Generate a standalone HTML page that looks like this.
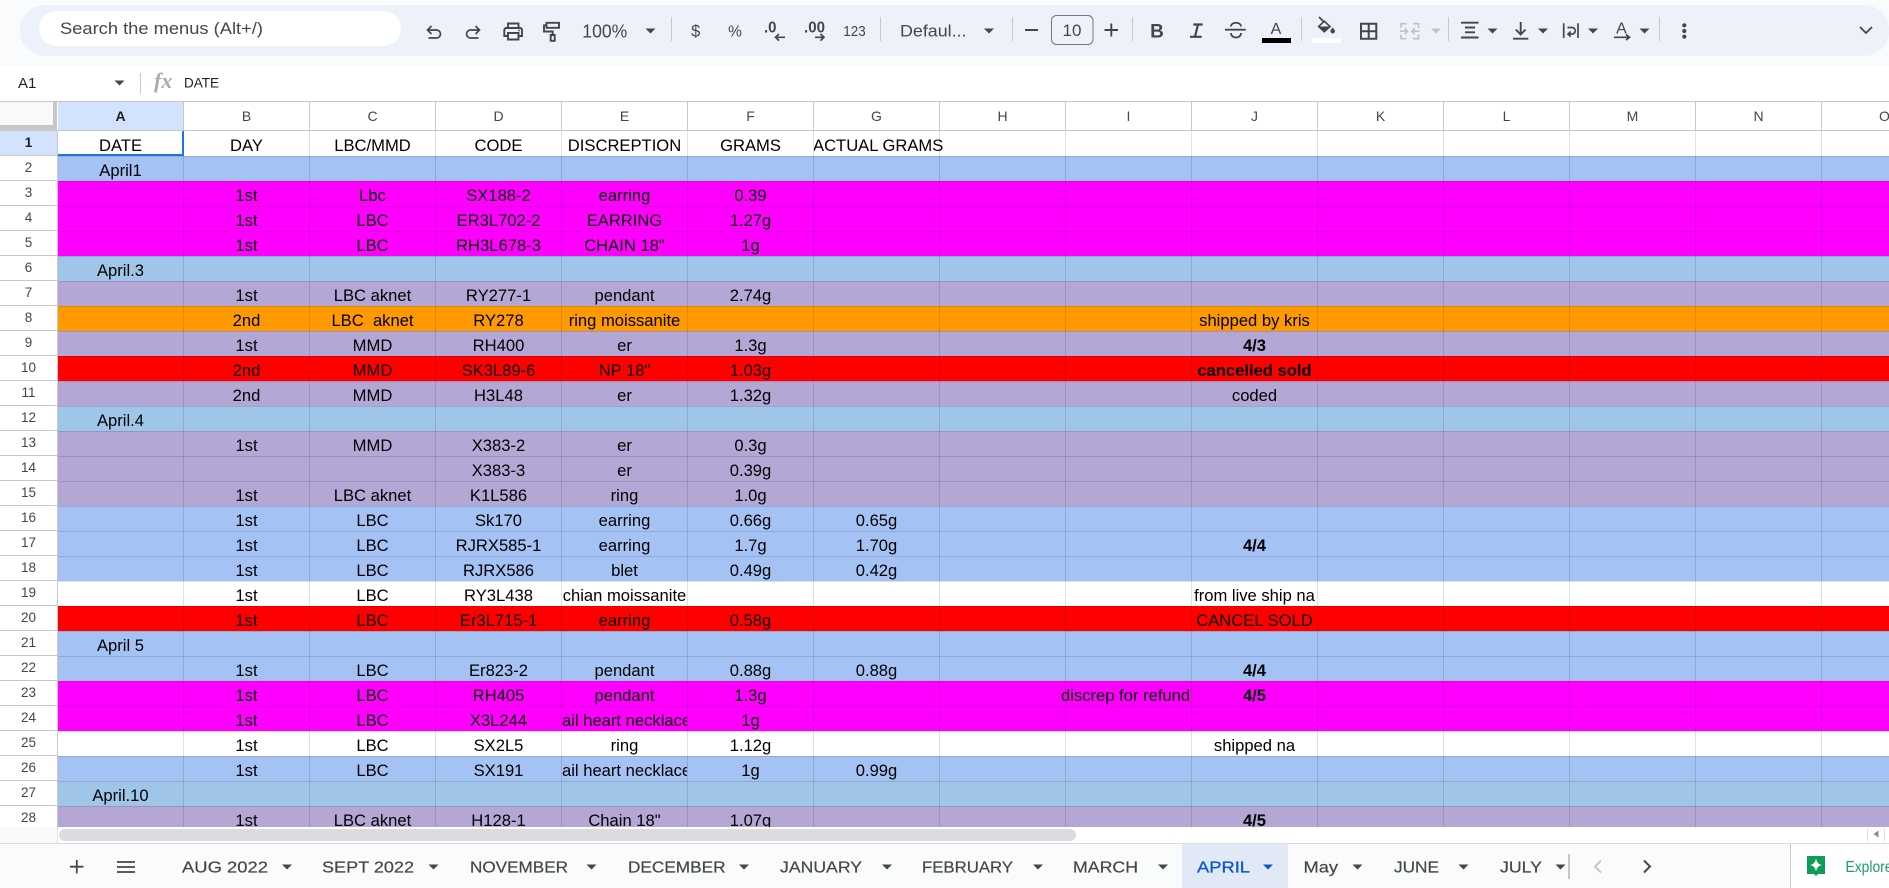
<!DOCTYPE html>
<html><head><meta charset="utf-8"><title>April</title>
<style>
html,body{margin:0;padding:0;width:1889px;height:888px;overflow:hidden;background:#fff}
body{position:relative;font-family:"Liberation Sans",Arial,sans-serif}
#g{position:absolute;left:58px;top:131px;width:1831px;height:696px;overflow:hidden}
.r{position:absolute;left:0;width:1831px;height:25px;box-sizing:border-box;border-top:1px solid rgba(0,0,0,.12);
background-image:repeating-linear-gradient(90deg,transparent 0,transparent 125px,rgba(0,0,0,.12) 125px,rgba(0,0,0,.12) 126px)}
.r i{position:absolute;top:4px;width:125px;height:20px;line-height:20px;font-style:normal;font-size:16.6px;color:#000;text-align:center;white-space:nowrap;overflow:hidden}
.a{left:0}.b{left:126px}.c{left:252px}.d{left:378px}.e{left:504px}.f{left:630px}.g{left:756px}.i{left:1003px;width:131px!important;text-align:left!important}.j{left:1134px}
.r i.l{text-align:left}
.r i.w{font-weight:bold}
.m{background-color:#f0f}.p{background-color:#b4a7d6}.u{background-color:#a4c2f4}.s{background-color:#9fc5e8}.o{background-color:#f90}.x{background-color:#f00}.y{background-color:#fff}
.h{position:absolute;top:102px;height:29px;width:125px;line-height:28px;text-align:center;font-size:14px;color:#444746;border-right:1px solid #c7c7c7;background:#fff}
.n{position:absolute;left:0;width:57px;height:24px;line-height:24px;text-align:center;font-size:13.5px;color:#444746;border-right:1px solid #c7c7c7;border-bottom:1px solid #c7c7c7;background:#fff}
svg{position:absolute;left:0;top:0}
</style></head><body>

<div style="position:absolute;left:0;top:0;width:1889px;height:66px;background:#f9fbfd"></div>
<div style="position:absolute;left:20px;top:5px;width:1869px;height:51px;background:#edf2fa;border-radius:25px"></div>
<div style="position:absolute;left:39px;top:11px;width:362px;height:35px;background:#fff;border-radius:18px"></div>

<!-- column headers -->
<div style="position:absolute;left:0;top:101px;width:1889px;height:1px;background:#c7c7c7"></div>
<div style="position:absolute;left:0;top:102px;width:57px;height:29px;background:#fff"></div>
<div style="position:absolute;left:0;top:102px;width:53px;height:23px;background:#f8f9fa"></div>
<div style="position:absolute;left:0;top:125px;width:57px;height:5px;background:#c7c7c7"></div>
<div style="position:absolute;left:53px;top:102px;width:4px;height:28px;background:#c7c7c7"></div>
<div class="h" style="left:58px;background:#d3e3fd;font-weight:bold;color:#1f1f1f">A</div>
<div class="h" style="left:184px">B</div>
<div class="h" style="left:310px">C</div>
<div class="h" style="left:436px">D</div>
<div class="h" style="left:562px">E</div>
<div class="h" style="left:688px">F</div>
<div class="h" style="left:814px">G</div>
<div class="h" style="left:940px">H</div>
<div class="h" style="left:1066px">I</div>
<div class="h" style="left:1192px">J</div>
<div class="h" style="left:1318px">K</div>
<div class="h" style="left:1444px">L</div>
<div class="h" style="left:1570px">M</div>
<div class="h" style="left:1696px">N</div>
<div class="h" style="left:1822px">O</div>
<div style="position:absolute;left:0;top:130px;width:1889px;height:1px;background:#c7c7c7"></div>

<!-- row numbers -->
<div class="n" style="top:131px;background:#d3e3fd;font-weight:bold;color:#1f1f1f">1</div>
<div class="n" style="top:156px">2</div>
<div class="n" style="top:181px">3</div>
<div class="n" style="top:206px">4</div>
<div class="n" style="top:231px">5</div>
<div class="n" style="top:256px">6</div>
<div class="n" style="top:281px">7</div>
<div class="n" style="top:306px">8</div>
<div class="n" style="top:331px">9</div>
<div class="n" style="top:356px">10</div>
<div class="n" style="top:381px">11</div>
<div class="n" style="top:406px">12</div>
<div class="n" style="top:431px">13</div>
<div class="n" style="top:456px">14</div>
<div class="n" style="top:481px">15</div>
<div class="n" style="top:506px">16</div>
<div class="n" style="top:531px">17</div>
<div class="n" style="top:556px">18</div>
<div class="n" style="top:581px">19</div>
<div class="n" style="top:606px">20</div>
<div class="n" style="top:631px">21</div>
<div class="n" style="top:656px">22</div>
<div class="n" style="top:681px">23</div>
<div class="n" style="top:706px">24</div>
<div class="n" style="top:731px">25</div>
<div class="n" style="top:756px">26</div>
<div class="n" style="top:781px">27</div>
<div class="n" style="top:806px">28</div>

<!-- grid -->
<div id="g">
<div class="r y" style="top:0;border-top-color:transparent"><i class="a">DATE</i><i class="b">DAY</i><i class="c">LBC/MMD</i><i class="d">CODE</i><i class="e">DISCREPTION</i><i class="f">GRAMS</i><i class="g l" style="width:200px;text-indent:-1px">ACTUAL GRAMS</i></div>
<div class="r u" style="top:25px"><i class="a">April1</i></div>
<div class="r m" style="top:50px"><i class="b">1st</i><i class="c">Lbc</i><i class="d">SX188-2</i><i class="e">earring</i><i class="f">0.39</i></div>
<div class="r m" style="top:75px"><i class="b">1st</i><i class="c">LBC</i><i class="d">ER3L702-2</i><i class="e">EARRING</i><i class="f">1.27g</i></div>
<div class="r m" style="top:100px"><i class="b">1st</i><i class="c">LBC</i><i class="d">RH3L678-3</i><i class="e">CHAIN 18"</i><i class="f">1g</i></div>
<div class="r s" style="top:125px"><i class="a">April.3</i></div>
<div class="r p" style="top:150px"><i class="b">1st</i><i class="c">LBC aknet</i><i class="d">RY277-1</i><i class="e">pendant</i><i class="f">2.74g</i></div>
<div class="r o" style="top:175px"><i class="b">2nd</i><i class="c">LBC&nbsp; aknet</i><i class="d">RY278</i><i class="e">ring moissanite</i><i class="j">shipped by kris</i></div>
<div class="r p" style="top:200px"><i class="b">1st</i><i class="c">MMD</i><i class="d">RH400</i><i class="e">er</i><i class="f">1.3g</i><i class="j w">4/3</i></div>
<div class="r x" style="top:225px"><i class="b">2nd</i><i class="c">MMD</i><i class="d">SK3L89-6</i><i class="e">NP 18"</i><i class="f">1.03g</i><i class="j w">cancelled sold</i></div>
<div class="r p" style="top:250px"><i class="b">2nd</i><i class="c">MMD</i><i class="d">H3L48</i><i class="e">er</i><i class="f">1.32g</i><i class="j">coded</i></div>
<div class="r s" style="top:275px"><i class="a">April.4</i></div>
<div class="r p" style="top:300px"><i class="b">1st</i><i class="c">MMD</i><i class="d">X383-2</i><i class="e">er</i><i class="f">0.3g</i></div>
<div class="r p" style="top:325px"><i class="d">X383-3</i><i class="e">er</i><i class="f">0.39g</i></div>
<div class="r p" style="top:350px"><i class="b">1st</i><i class="c">LBC aknet</i><i class="d">K1L586</i><i class="e">ring</i><i class="f">1.0g</i></div>
<div class="r u" style="top:375px"><i class="b">1st</i><i class="c">LBC</i><i class="d">Sk170</i><i class="e">earring</i><i class="f">0.66g</i><i class="g">0.65g</i></div>
<div class="r u" style="top:400px"><i class="b">1st</i><i class="c">LBC</i><i class="d">RJRX585-1</i><i class="e">earring</i><i class="f">1.7g</i><i class="g">1.70g</i><i class="j w">4/4</i></div>
<div class="r u" style="top:425px"><i class="b">1st</i><i class="c">LBC</i><i class="d">RJRX586</i><i class="e">blet</i><i class="f">0.49g</i><i class="g">0.42g</i></div>
<div class="r y" style="top:450px"><i class="b">1st</i><i class="c">LBC</i><i class="d">RY3L438</i><i class="e">chian moissanite</i><i class="j">from live ship na</i></div>
<div class="r x" style="top:475px"><i class="b">1st</i><i class="c">LBC</i><i class="d">Er3L715-1</i><i class="e">earring</i><i class="f">0.58g</i><i class="j">CANCEL SOLD</i></div>
<div class="r u" style="top:500px"><i class="a">April 5</i></div>
<div class="r u" style="top:525px"><i class="b">1st</i><i class="c">LBC</i><i class="d">Er823-2</i><i class="e">pendant</i><i class="f">0.88g</i><i class="g">0.88g</i><i class="j w">4/4</i></div>
<div class="r m" style="top:550px"><i class="b">1st</i><i class="c">LBC</i><i class="d">RH405</i><i class="e">pendant</i><i class="f">1.3g</i><i class="i">discrep for refund</i><i class="j w">4/5</i></div>
<div class="r m" style="top:575px"><i class="b">1st</i><i class="c">LBC</i><i class="d">X3L244</i><i class="e l">ail heart necklace</i><i class="f">1g</i></div>
<div class="r y" style="top:600px"><i class="b">1st</i><i class="c">LBC</i><i class="d">SX2L5</i><i class="e">ring</i><i class="f">1.12g</i><i class="j">shipped na</i></div>
<div class="r u" style="top:625px"><i class="b">1st</i><i class="c">LBC</i><i class="d">SX191</i><i class="e l">ail heart necklace</i><i class="f">1g</i><i class="g">0.99g</i></div>
<div class="r s" style="top:650px"><i class="a">April.10</i></div>
<div class="r p" style="top:675px"><i class="b">1st</i><i class="c">LBC aknet</i><i class="d">H128-1</i><i class="e">Chain 18"</i><i class="f">1.07g</i><i class="j w">4/5</i></div>
</div>

<!-- selection -->
<div style="position:absolute;left:58px;top:154px;width:126px;height:2px;background:#1a73e8"></div>
<div style="position:absolute;left:182px;top:131px;width:2px;height:25px;background:#1a73e8"></div>

<svg width="1889" height="888" viewBox="0 0 1889 888" font-family="Liberation Sans, Arial, sans-serif">
<!-- scrollbar strip -->
<rect x="0" y="827" width="1889" height="16" fill="#fff"/>
<rect x="0" y="827" width="58" height="16" fill="#f8f9fa"/>
<rect x="57" y="827" width="1" height="16" fill="#e0e0e0"/>
<rect x="59" y="829" width="1017" height="12" rx="6" fill="#dadce0"/>
<path d="M1867.5 828V841M1884.5 828V841" stroke="#e0e0e0" fill="none"/>
<path d="M1878.5 830.5v7l-5-3.5z" fill="#8a8a8a"/>
<!-- tab bar -->
<rect x="0" y="843" width="1889" height="45" fill="#f9fbfd"/>
<rect x="0" y="843" width="1889" height="1" fill="#dadce0"/>
<rect x="1182" y="844" width="106" height="44" fill="#e1e9f7"/>
<rect x="1790" y="844" width="99" height="44" fill="#fff"/>
<rect x="1790" y="844" width="1" height="44" fill="#c7c7c7"/>
<path d="M70 866.7H83.5M76.8 860V873.4" stroke="#444746" stroke-width="1.8" fill="none"/>
<path d="M117 862H135M117 867H135M117 872H135" stroke="#444746" stroke-width="1.7" fill="none"/>
<g font-size="16" fill="#444746" stroke="#444746" stroke-width=".2">
<text x="182" y="872.7" textLength="86" lengthAdjust="spacingAndGlyphs">AUG 2022</text>
<text x="322" y="872.7" textLength="92" lengthAdjust="spacingAndGlyphs">SEPT 2022</text>
<text x="470" y="872.7" textLength="98" lengthAdjust="spacingAndGlyphs">NOVEMBER</text>
<text x="628" y="872.7" textLength="97.5" lengthAdjust="spacingAndGlyphs">DECEMBER</text>
<text x="780" y="872.7" textLength="82" lengthAdjust="spacingAndGlyphs">JANUARY</text>
<text x="922" y="872.7" textLength="91" lengthAdjust="spacingAndGlyphs">FEBRUARY</text>
<text x="1073" y="872.7" textLength="65" lengthAdjust="spacingAndGlyphs">MARCH</text>
<text x="1303.5" y="872.7" textLength="34.5" lengthAdjust="spacingAndGlyphs">May</text>
<text x="1394" y="872.7" textLength="45" lengthAdjust="spacingAndGlyphs">JUNE</text>
<text x="1500" y="872.7" textLength="42" lengthAdjust="spacingAndGlyphs">JULY</text>
</g>
<text x="1197" y="872.7" font-size="16" fill="#0b57d0" stroke="#0b57d0" stroke-width=".3" textLength="53" lengthAdjust="spacingAndGlyphs">APRIL</text>
<path fill="#444746" d="M282 864.5h10l-5 5zM428.5 864.5h10l-5 5zM586.5 864.5h10l-5 5zM739 864.5h10l-5 5zM882 864.5h10l-5 5zM1033 864.5h10l-5 5zM1158 864.5h10l-5 5zM1352.5 864.5h10l-5 5zM1458.5 864.5h10l-5 5zM1555.5 864.5h10l-5 5z"/>
<path fill="#0b57d0" d="M1263 864.5h10l-5 5z"/>
<rect x="1568" y="854" width="2" height="25" fill="#c4c7c5"/>
<path d="M1601 860.5L1595 866.5L1601 872.5" stroke="#c4c7c5" stroke-width="2" fill="none"/>
<path d="M1644 860.5L1650 866.5L1644 872.5" stroke="#444746" stroke-width="2" fill="none"/>
<path d="M1807 856H1825V874H1818L1816 876L1814 874H1807Z" fill="#0f9d58"/>
<path d="M1816 858.5Q1816.8 864.2 1822 865Q1816.8 865.8 1816 871.5Q1815.2 865.8 1810 865Q1815.2 864.2 1816 858.5Z" fill="#fff"/>
<text x="1845.5" y="872" font-size="15.5" fill="#1e9e63" textLength="47" lengthAdjust="spacingAndGlyphs">Explore</text>

<!-- formula bar -->
<text x="18" y="88" font-size="15" fill="#1f1f1f">A1</text>
<path d="M114.5 80.5h10l-5 5z" fill="#444746"/>
<rect x="140" y="73" width="1" height="21" fill="#c7c7c7"/>
<text x="154" y="88" font-family="Liberation Serif, serif" font-style="italic" font-weight="bold" font-size="22" fill="#a8abae">fx</text>
<text x="184" y="87.5" font-size="13.5" fill="#1f1f1f">DATE</text>

<!-- toolbar -->
<text x="60" y="34" font-size="17" fill="#444746" textLength="203" lengthAdjust="spacingAndGlyphs">Search the menus (Alt+/)</text>
<g fill="none" stroke="#444746" stroke-width="1.7">
<path d="M431.5 26L427.5 30L431.5 34M427.5 30H436.5a4 4 0 0 1 0 8H428.5"/>
<path d="M475.5 26L479.5 30L475.5 34M479.5 30H470.5a4 4 0 0 0 0 8H478.5"/>
<path d="M508 28V23.5H518.5V28M508 36H504.3V30a2 2 0 0 1 2-2H520a2 2 0 0 1 2 2V36H518.5M508 33H518.5V39.5H508Z" stroke-width="1.9"/>
<path d="M546.5 22.8H559V27.8H546.5ZM546.5 25.3H544V31.5H552.7V35M550.7 35H554.7V40.8H550.7Z" stroke-width="1.9"/>
</g>
<circle cx="519" cy="30.5" r=".9" fill="#444746"/>
<text x="582.3" y="37.5" font-size="18" fill="#444746" textLength="45" lengthAdjust="spacingAndGlyphs">100%</text>
<path d="M645.5 28.5h10l-5 5zM984 28.5h10l-5 5zM1487.5 28.5h10l-5 5zM1538 28.5h10l-5 5zM1588 28.5h10l-5 5zM1639.5 28.5h10l-5 5z" fill="#444746"/>
<path d="M1431 28.5h10l-5 5z" fill="#bfc2c6"/>
<path d="M671.5 17V41M880.5 17V41M1012.5 17V41M1132.5 17V41M1301.5 17V41M1448.5 17V41M1659.5 17V41" stroke="#c7c9cc" stroke-width="1"/>
<text x="695.7" y="36.7" font-size="16.5" fill="#444746" text-anchor="middle">$</text>
<text x="735" y="36.5" font-size="15.5" fill="#444746" text-anchor="middle">%</text>
<text x="764" y="32.5" font-size="16" font-weight="bold" fill="#444746" textLength="12.5" lengthAdjust="spacingAndGlyphs">.0</text>
<text x="804" y="32.5" font-size="16" font-weight="bold" fill="#444746" textLength="21" lengthAdjust="spacingAndGlyphs">.00</text>
<path d="M785 37.3H775.5M779 34L775.5 37.3L779 40.6M815 37.3H824M820.5 34L824 37.3L820.5 40.6" fill="none" stroke="#444746" stroke-width="1.7"/>
<text x="843.3" y="36" font-size="15" fill="#444746" textLength="22.4" lengthAdjust="spacingAndGlyphs">123</text>
<text x="900" y="36.5" font-size="17" fill="#444746" textLength="66.5" lengthAdjust="spacingAndGlyphs">Defaul...</text>
<path d="M1025 30H1038M1104.5 30H1118M1111.3 23.5V36.5" stroke="#444746" stroke-width="1.9" fill="none"/>
<rect x="1051.5" y="15.5" width="41.5" height="29" rx="5" fill="none" stroke="#747775"/>
<text x="1072" y="36" font-size="17" fill="#444746" text-anchor="middle">10</text>
<text x="1157" y="37.3" font-size="19" font-weight="bold" fill="#444746" text-anchor="middle">B</text>
<path d="M1193.3 24.5H1202.7M1190 36.8H1201.7M1198 24.5L1195 36.8" fill="none" stroke="#444746" stroke-width="2.2"/>
<path d="M1225 29.7H1245.7M1231 26.5C1231 21.5 1241 21.5 1241 26.5M1231 33C1231 39 1241 39 1241 33" fill="none" stroke="#444746" stroke-width="1.8"/>
<text x="1276" y="34" font-size="16" fill="#444746" text-anchor="middle">A</text>
<rect x="1262" y="38" width="29" height="5" fill="#000"/>
<path d="M1319 17L1324.5 22.5" fill="none" stroke="#444746" stroke-width="1.7"/>
<path d="M1324.3 21.2L1330 26.5L1324.3 31.8L1318.6 26.5Z" fill="none" stroke="#444746" stroke-width="1.6"/>
<path d="M1318.6 26.5H1330L1324.3 31.8Z" fill="#444746"/>
<path d="M1332.7 27.5c1.6 2 2.3 2.9 2.3 3.6a2.3 2.3 0 0 1-4.6 0c0-.7.7-1.6 2.3-3.6z" fill="#444746"/>
<rect x="1312" y="38" width="29" height="5" fill="#fff"/>
<path d="M1361 23.7H1376.3V38.7H1361ZM1368.7 23.7V38.7M1361 31.2H1376.3" fill="none" stroke="#444746" stroke-width="2"/>
<g fill="none" stroke="#bfc2c6" stroke-width="1.7">
<path d="M1401 28V23.7H1406.5M1413 23.7H1418.5V28M1401 34.5V38.7H1406.5M1413 38.7H1418.5V34.5M1400 31.2H1407.5M1404.7 28.3L1407.5 31.2L1404.7 34M1419.5 31.2H1412M1414.8 28.3L1412 31.2L1414.8 34"/>
</g>
<path d="M1461 22.7H1478.5M1465 27.5H1475M1465 32.3H1475M1461 37.5H1478.5" stroke="#444746" stroke-width="1.9" fill="none"/>
<path d="M1513 38.7H1528.3M1520.7 22V34.5M1515.8 29.5L1520.7 34.5L1525.5 29.5" stroke="#444746" stroke-width="1.9" fill="none"/>
<path d="M1563.7 23.3V38M1578 23.3V38M1567.5 27.5H1572a3.3 3.3 0 0 1 0 6.6H1568.5M1570.7 31.5L1568 34.1L1570.7 36.7" stroke="#444746" stroke-width="1.7" fill="none"/>
<text x="1621.5" y="33.5" font-size="16" fill="#444746" text-anchor="middle">A</text>
<path d="M1614 37.3H1629M1626 34.5L1629.5 37.3L1626 40.1" stroke="#444746" stroke-width="1.7" fill="none"/>
<circle cx="1684.3" cy="25.3" r="2.1" fill="#444746"/><circle cx="1684.3" cy="31" r="2.1" fill="#444746"/><circle cx="1684.3" cy="36.7" r="2.1" fill="#444746"/>
<path d="M1860 27L1866 33L1872 27" fill="none" stroke="#444746" stroke-width="1.8"/>
</svg>
</body></html>
